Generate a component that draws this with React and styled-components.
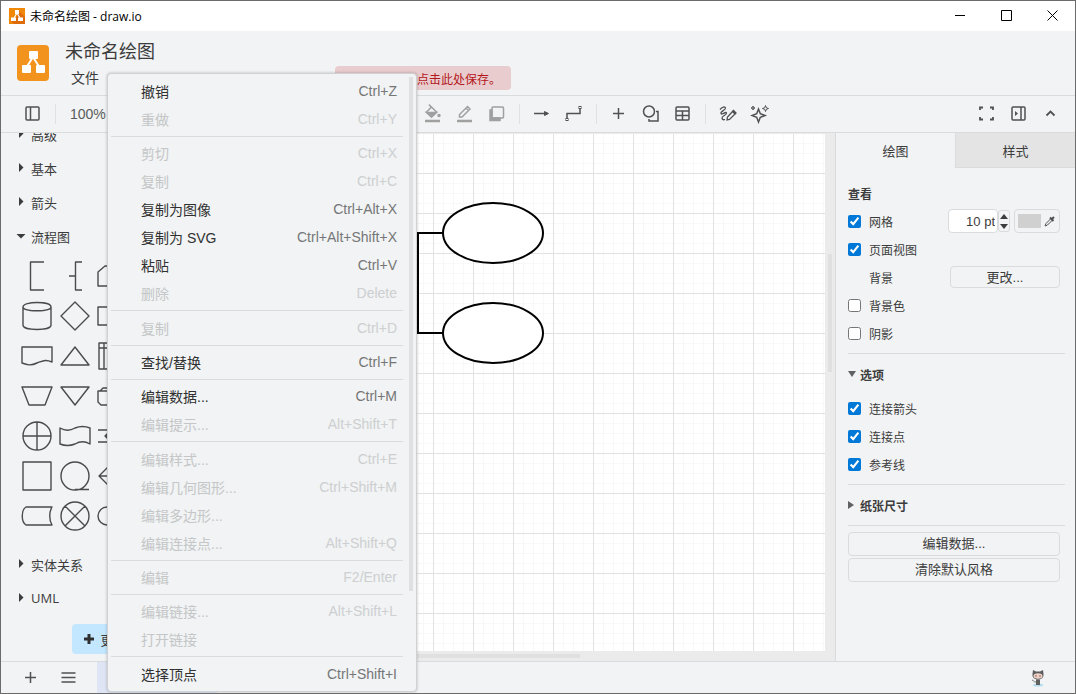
import { useState } from "react";
import styled, { createGlobalStyle } from "styled-components";

const ink = "#3c3c3c";
const chrome = "#f1f3f4";
const line = "#d9dbdc";
const uiFont = `"Open Sans", "Noto Sans CJK SC", sans-serif`;
const menuFont = `"Liberation Sans", "Noto Sans CJK SC", sans-serif`;

const GlobalStyle = createGlobalStyle`
  * {
    box-sizing: border-box;
  }
  body {
    margin: 0;
    font-family: ${menuFont};
    color: ${ink};
  }
  button {
    font: inherit;
    color: inherit;
    background: none;
    border: 0;
    padding: 0;
    cursor: pointer;
  }
`;

const Window = styled.div`
  position: relative;
  height: 100vh;
  display: flex;
  flex-direction: column;
  border: 1px solid #6b6b6b;
  background-color: ${chrome};
  overflow: hidden;
`;

const TitleBar = styled.div`
  height: 30px;
  flex: none;
  display: flex;
  align-items: center;
  padding-left: 8px;
  gap: 5px;
  background-color: white;
  color: black;
  font-family: ${uiFont};
  font-size: 12px;
`;

const TitleText = styled.span`
  flex: 1;
`;

const WindowButtons = styled.div`
  display: flex;
  height: 100%;
`;

const WindowButton = styled.button`
  width: 46px;
  display: flex;
  align-items: center;
  justify-content: center;
`;

const Header = styled.header`
  height: 65px;
  flex: none;
  display: flex;
  padding-left: 16px;
  gap: 16px;
  border-bottom: 1px solid ${line};
`;

const Logo = styled.svg`
  flex: none;
  margin-top: 14px;
`;

const HeaderMain = styled.div`
  flex: 1;
`;

const FileName = styled.h1`
  margin: 8px 0 0;
  font-size: 18px;
  font-weight: 400;
  line-height: 26px;
`;

const MenuBar = styled.div`
  display: flex;
  align-items: center;
  gap: 236px;
`;

const MenuBarItem = styled.button`
  margin-left: 6px;
  font-size: 14px;
  line-height: 26px;
`;

const SaveAlert = styled.button`
  height: 24px;
  padding: 0 10px;
  border-radius: 4px;
  background-color: #e9cccd;
  color: #b3171c;
  font-size: 12px;
`;

const Toolbar = styled.div`
  height: 37px;
  flex: none;
  display: flex;
  align-items: center;
  padding: 0 8px 0 16px;
  border-bottom: 1px solid ${line};
`;

const ToolButton = styled.button`
  width: 32px;
  height: 32px;
  display: flex;
  align-items: center;
  justify-content: center;
  color: ${({ disabled }) => (disabled ? "#a0a0a0" : "#505152")};
`;

const ToolSeparator = styled.div`
  width: 1px;
  height: 20px;
  margin: 0 6px;
  background-color: #dfe1e2;
`;

const ZoomButton = styled.button`
  width: 355px;
  padding-left: 8px;
  text-align: left;
  font-size: 14px;
  color: #5a5a5a;
`;

const Spacer = styled.div`
  flex: 1;
`;

const Body = styled.div`
  flex: 1;
  min-height: 0;
  display: flex;
`;

const Sidebar = styled.aside`
  width: 236px;
  flex: none;
  display: flex;
  flex-direction: column;
  border-right: 1px solid ${line};
`;

const Palettes = styled.div`
  flex: 1;
  overflow: hidden;
  display: flex;
  flex-direction: column;
  justify-content: flex-end;
`;

const PaletteTitle = styled.button`
  height: 34px;
  flex: none;
  display: flex;
  align-items: center;
  gap: 4px;
  padding-left: 14px;
  font-family: ${uiFont};
  font-size: 13px;
`;

const ShapeGrid = styled.div`
  flex: none;
  display: grid;
  grid-template-columns: repeat(3, 38px);
  grid-auto-rows: 40px;
  padding: 3px 0 11px 17px;
`;

const ShapeButton = styled.button`
  display: flex;
  align-items: center;
  justify-content: center;
`;

const MoreShapesBar = styled.div`
  height: 46px;
  flex: none;
  display: flex;
  justify-content: center;
  align-items: flex-start;
  padding-top: 9px;
`;

const MoreShapes = styled.button`
  height: 30px;
  display: flex;
  align-items: center;
  gap: 6px;
  padding: 0 12px;
  border-radius: 4px;
  background-color: #c2e7ff;
  font-size: 13px;
`;

const DiagramArea = styled.main`
  position: relative;
  flex: 1;
  min-width: 0;
  display: flex;
  padding: 1px 10px 10px 0;
  background-color: #ebebeb;
`;

const Page = styled.svg`
  flex: 1;
  min-width: 0;
  height: 100%;
  background-color: white;
  background-image: linear-gradient(to right, #e2e2e2 1px, transparent 1px),
    linear-gradient(to bottom, #e2e2e2 1px, transparent 1px),
    linear-gradient(to right, #f8f8f8 1px, transparent 1px),
    linear-gradient(to bottom, #f8f8f8 1px, transparent 1px);
  background-size: 40px 40px, 40px 40px, 10px 10px, 10px 10px;
  background-position: 36px -1px, 36px -1px, 6px -1px, 6px -1px;
`;

const ScrollThumb = styled.div`
  position: absolute;
  background-color: #e0e0e0;
  ${({ $vertical }) =>
    $vertical
      ? `right: 3px; top: 121px; width: 4px; height: 118px;`
      : `bottom: 3px; left: 0; height: 4px; width: 343px;`}
`;

const FormatPanel = styled.aside`
  width: 240px;
  flex: none;
  border-left: 1px solid ${line};
`;

const Tabs = styled.div`
  display: flex;
  height: 35px;
`;

const Tab = styled.button`
  flex: 1;
  font-size: 13px;
  ${({ $active }) =>
    !$active &&
    `
    background-color: #e4e4e4;
    border-left: 1px solid ${line};
    border-bottom: 1px solid ${line};
  `}
`;

const Section = styled.section`
  margin: 0 10px 0 12px;
  padding-bottom: ${({ $closed }) => ($closed ? "0" : "6px")};
  border-bottom: 1px solid ${line};
`;

const SectionTitle = styled.h2`
  margin: 0;
  height: 40px;
  display: flex;
  align-items: center;
  gap: 4px;
  font-size: 12px;
  font-weight: 700;
`;

const ViewTitle = styled(SectionTitle)`
  height: 27px;
  padding-top: 0;
  margin-top: 12px;
`;

const OptionRow = styled.div`
  height: 28px;
  display: flex;
  align-items: center;
  padding-right: 5px;
`;

const OptionLabel = styled.label`
  flex: 1;
  display: flex;
  align-items: center;
  gap: 8px;
  font-size: 12px;
`;

const Checkbox = styled.input`
  width: 13px;
  height: 13px;
  margin: 0;
  accent-color: #0078d7;
`;

const OptionText = styled.span`
  flex: 1;
  padding-left: 21px;
  font-size: 12px;
`;

const GridSize = styled.input`
  width: 50px;
  height: 24px;
  padding: 0 2px;
  border: 1px solid ${line};
  border-radius: 4px;
  background-color: white;
  color: ${ink};
  font-family: ${menuFont};
  font-size: 13px;
  text-align: right;
`;

const Stepper = styled.div`
  width: 12px;
  height: 22px;
  display: flex;
  flex-direction: column;
  border: 1px solid ${line};
  border-radius: 3px;
`;

const StepButton = styled.button`
  flex: 1;
  display: flex;
  align-items: center;
  justify-content: center;
`;

const PanelButton = styled.button`
  height: 24px;
  border: 1px solid ${line};
  border-radius: 4px;
  font-size: 13px;
  line-height: 22px;
`;

const ChangeButton = styled(PanelButton)`
  width: 110px;
  height: 22px;
`;

const ColorButton = styled(PanelButton)`
  width: 46px;
  margin-left: 4px;
  display: flex;
  align-items: center;
  justify-content: center;
  gap: 3px;
`;

const Swatch = styled.span`
  width: 23px;
  height: 14px;
  background-color: #d0d0d0;
`;

const PanelActions = styled.div`
  display: flex;
  flex-direction: column;
  gap: 2px;
  padding: 6px 15px 0 12px;
`;

const Footer = styled.footer`
  height: 32px;
  flex: none;
  display: flex;
  align-items: center;
  padding-left: 11px;
  border-top: 1px solid ${line};
`;

const FooterButton = styled.button`
  width: 38px;
  height: 31px;
  display: flex;
  align-items: center;
  justify-content: center;
  color: #505152;
`;

const PageTab = styled.button`
  width: 120px;
  height: 31px;
  margin-left: 9px;
  background-color: #dfe5f5;
  font-size: 12px;
`;

const CatLink = styled.a`
  display: flex;
  margin-right: 29px;
`;

const PopupMenu = styled.div`
  position: absolute;
  top: 72px;
  left: 106px;
  width: 310px;
  padding: 3px;
  border: 1px solid #cfd1d2;
  border-radius: 4px;
  background-color: ${chrome};
  box-shadow: 0 0 3px rgba(0, 0, 0, 0.25);
`;

const PopupItems = styled.div`
  padding-right: 10px;
`;

const PopupItem = styled.button`
  width: 100%;
  height: 28px;
  display: flex;
  align-items: center;
  justify-content: space-between;
  padding: 0 6px 0 30px;
  font-size: 14px;
  color: ${({ disabled }) => (disabled ? "#c4c6c7" : "#303030")};
`;

const Shortcut = styled.span`
  color: ${({ $disabled }) => ($disabled ? "#cdcfd0" : "#757677")};
`;

const PopupSeparator = styled.hr`
  height: 6px;
  margin: 0;
  border: 0;
  background: linear-gradient(${line}, ${line}) 0 3px / 100% 1px no-repeat;

  &:nth-of-type(3n + 2) {
    height: 7px;
  }
`;

const PopupScroll = styled.div`
  position: absolute;
  top: 3px;
  right: 3px;
  width: 4px;
  height: 514px;
  background-color: #e0e0e0;
`;

const menuGroups = [
  [
    { label: "撤销", keys: "Ctrl+Z", on: true },
    { label: "重做", keys: "Ctrl+Y" },
  ],
  [
    { label: "剪切", keys: "Ctrl+X" },
    { label: "复制", keys: "Ctrl+C" },
    { label: "复制为图像", keys: "Ctrl+Alt+X", on: true },
    { label: "复制为 SVG", keys: "Ctrl+Alt+Shift+X", on: true },
    { label: "粘贴", keys: "Ctrl+V", on: true },
    { label: "删除", keys: "Delete" },
  ],
  [{ label: "复制", keys: "Ctrl+D" }],
  [{ label: "查找/替换", keys: "Ctrl+F", on: true }],
  [
    { label: "编辑数据...", keys: "Ctrl+M", on: true },
    { label: "编辑提示...", keys: "Alt+Shift+T" },
  ],
  [
    { label: "编辑样式...", keys: "Ctrl+E" },
    { label: "编辑几何图形...", keys: "Ctrl+Shift+M" },
    { label: "编辑多边形..." },
    { label: "编辑连接点...", keys: "Alt+Shift+Q" },
  ],
  [{ label: "编辑", keys: "F2/Enter" }],
  [{ label: "编辑链接...", keys: "Alt+Shift+L" }, { label: "打开链接" }],
  [{ label: "选择顶点", keys: "Ctrl+Shift+I", on: true }],
];

// flowchart stencils, each drawn in a 32x32 box
const shapes = [
  ["注释", "M23 2H9.500V30H23"],
  ["注释 2", "M23 2H16.500V30H23M16.500 16H10"],
  ["卡片", "M1 12L8 6H31V26H1Z"],
  ["数据库", "M2 7C2 1 30 1 30 7V25C30 31 2 31 2 25ZM2 7C2 12 30 12 30 7"],
  ["判定", "M16 2L30 16L16 30L2 16Z"],
  ["延迟", "M1 7H22A9 9 0 0 1 22 25H1Z"],
  ["文档", "M1 7H31V22C24 19 22 21 16 23C10 26 6 25 1 23Z"],
  ["提取", "M16 7L30 25H2Z"],
  ["内部存储", "M2 3H30V29H2ZM7 3V29M2 8H30"],
  ["手动操作", "M1 7H31L24 25H8Z"],
  ["合并", "M2 7H30L16 25Z"],
  ["多文档", "M1 11H27V25H4L1 22ZM3 11L6 8H30V22H27"],
  ["或", "M16 2A14 14 0 1 1 16 30A14 14 0 1 1 16 2M16 2V30M2 16H30"],
  ["纸带", "M1 8C6 11 11 11 16 8C21 6 26 6 31 8V24C26 21 21 21 16 24C11 26 6 26 1 24Z"],
  ["并行", "M1 10H31M1 22H31M8 16H24M11 13L8 16L11 19"],
  ["流程", "M2 2H30V30H2Z"],
  ["顺序数据", "M16 2A14 14 0 1 1 16 30A14 14 0 1 1 16 2M16 29.500H30"],
  ["排序", "M16 2L30 16L16 30L2 16ZM2 16H30"],
  ["存储数据", "M5 7H31C28 12 28 20 31 25H5C0 22 0 10 5 7Z"],
  ["汇总", "M16 2A14 14 0 1 1 16 30A14 14 0 1 1 16 2M6 6L26 26M26 6L6 26"],
  ["终止符", "M10 7H22A9 9 0 0 1 22 25H10A9 9 0 0 1 10 7Z"],
];

const icons = {
  sidebar: (
    <>
      <rect x="3" y="3" width="13" height="13" rx="1" />
      <path d="M7.500 3V16" />
    </>
  ),
  fill: (
    <>
      <path d="M6 0.500L8.500 3.500" />
      <path d="M3.500 8L8.500 3L13.500 8L8.500 13Z" />
      <path d="M3.500 8.500H13.500L8.500 13Z" fill="currentColor" />
      <circle cx="16" cy="11.500" r="1" fill="currentColor" />
      <path d="M2 17H17" strokeWidth="2.500" />
    </>
  ),
  pen: (
    <>
      <path d="M4.500 13V10.500L12.500 2.500L15 5L7 13ZM11 4L13.500 6.500" />
      <path d="M2 17H17" strokeWidth="2.500" />
    </>
  ),
  shadow: (
    <>
      <path d="M3 6V16.500H13V14H5V6Z" fill="currentColor" />
      <rect x="5" y="3" width="11.500" height="11" rx="1" />
    </>
  ),
  arrow: (
    <>
      <path d="M2 9.500H15" />
      <path d="M12.500 7.500L16.500 9.500L12.500 11.500Z" fill="currentColor" strokeWidth="1" />
    </>
  ),
  elbow: (
    <>
      <path d="M3 15V9.500H16V5" />
      <rect x="2" y="14.500" width="2" height="2" strokeWidth="1" />
      <rect x="15" y="2.500" width="2" height="2" strokeWidth="1" />
    </>
  ),
  plus: <path d="M9.500 4V15M4 9.500H15" />,
  shapes: (
    <>
      <circle cx="8" cy="7.500" r="5.500" />
      <path d="M15 7.500H17V17H8V15" />
    </>
  ),
  table: (
    <>
      <rect x="3" y="3" width="13" height="13" rx="1" />
      <path d="M3 7H16M3 11.500H16M9.500 7V16" />
    </>
  ),
  freehand: (
    <g strokeWidth="1.300">
      <path d="M2 5.500C4 3 7 2 7.500 4S2 7.500 3 9.500S8 7 8.500 9S3.500 12 4 14S5.500 16 7 15.500" />
      <path d="M9 16L9.500 13L14.500 7.500L17 10L11.500 15.500Z" />
      <path d="M14.500 7.500L15.500 6.500L18 9L17 10" fill="currentColor" />
    </g>
  ),
  sparkle: (
    <>
      <path d="M8.500 5L10.300 9.700L15 11.500L10.300 13.300L8.500 18L6.700 13.300L2 11.500L6.700 9.700Z" />
      <path d="M15.500 1.500L16.300 3.700L18.500 4.500L16.300 5.300L15.500 7.500L14.700 5.300L12.500 4.500L14.700 3.700Z" strokeWidth="1" />
      <path d="M3 2L3.500 3.500L5 4L3.500 4.500L3 6L2.500 4.500L1 4L2.500 3.500Z" strokeWidth="1" />
    </>
  ),
  fullscreen: <path d="M3 6V3.500H6M13 3.500H16V6M16 13V15.500H13M6 15.500H3V13" strokeWidth="1.800" />,
  format: (
    <>
      <rect x="3" y="3" width="13" height="13" rx="1" />
      <path d="M12 3V16" />
      <path d="M6 7L9 9.500L6 12Z" fill="currentColor" stroke="none" />
    </>
  ),
  collapse: <path d="M5.500 11.500L9.500 7.500L13.500 11.500" strokeWidth="1.800" />,
  pages: <path d="M2.500 5H16.500M2.500 9.500H16.500M2.500 14H16.500" strokeWidth="1.600" />,
};

function Icon({ name }) {
  return (
    <svg width="20" height="20" fill="none" stroke="currentColor" strokeWidth="1.500">
      {icons[name]}
    </svg>
  );
}

function Tool({ name, title, disabled }) {
  return (
    <ToolButton aria-label={title} disabled={disabled}>
      <Icon name={name} />
    </ToolButton>
  );
}

function Caret({ open }) {
  return (
    <svg width="12" height="12" fill="#3c3c3c">
      <path d={open ? "M1.500 4H10.500L6 8.500Z" : "M4 1L8.500 5.500L4 10Z"} />
    </svg>
  );
}

function PanelCaret({ open }) {
  return (
    <svg width="8" height="10" fill="#606162">
      <path d={open ? "M0 2H8L4 8Z" : "M0 1L6 5L0 9Z"} />
    </svg>
  );
}

function AppMark() {
  return (
    <svg width="16" height="16">
      <rect width="16" height="16" fill="#f08705" />
      <path d="M10 3L16 9V16H5L2 13L8 8Z" fill="#df6c0c" />
      <path d="M8 5L4.500 11M8 5L11.500 11" stroke="white" strokeWidth="1.200" />
      <rect x="6" y="2" width="4" height="4" fill="white" />
      <rect x="2" y="9.500" width="5" height="3.500" fill="white" />
      <rect x="9" y="9.500" width="5" height="3.500" fill="white" />
    </svg>
  );
}

function Octocat() {
  return (
    <svg width="16" height="18">
      <ellipse cx="8" cy="16" rx="5" ry="1.500" fill="#b5dcec" />
      <path d="M3 1L6 2.500H10L13 1L13.500 5C14 9 11 10.500 8 10.500S2 9 2.500 5Z" fill="#5c5c5c" />
      <ellipse cx="8" cy="7" rx="4.500" ry="2.800" fill="#eed2c8" />
      <circle cx="6" cy="7" r="1" fill="#b08a82" />
      <circle cx="10" cy="7" r="1" fill="#b08a82" />
      <path d="M6 10.500H10V16H6Z" fill="#606060" />
      <path d="M6 13C4 13.500 4 11.500 2 11" stroke="#777" fill="none" />
    </svg>
  );
}

function Option({ label, initial = false, children }) {
  const [checked, setChecked] = useState(initial);
  return (
    <OptionRow>
      <OptionLabel>
        <Checkbox type="checkbox" checked={checked} onChange={() => setChecked(!checked)} />
        {label}
      </OptionLabel>
      {children}
    </OptionRow>
  );
}

function EditMenu() {
  return (
    <PopupMenu role="menu">
      <PopupItems>
        {menuGroups.flatMap((group, i) => [
          i > 0 && <PopupSeparator key={`sep${i}`} />,
          ...group.map(({ label, keys, on }) => (
            <PopupItem key={i + label} role="menuitem" disabled={!on}>
              {label}
              <Shortcut $disabled={!on}>{keys}</Shortcut>
            </PopupItem>
          )),
        ])}
      </PopupItems>
      <PopupScroll />
    </PopupMenu>
  );
}

function ShapeSidebar() {
  return (
    <Sidebar>
      <Palettes>
        {["高级", "基本", "箭头"].map((name) => (
          <PaletteTitle key={name}>
            <Caret />
            {name}
          </PaletteTitle>
        ))}
        <PaletteTitle>
          <Caret open />
          流程图
        </PaletteTitle>
        <ShapeGrid>
          {shapes.map(([name, d]) => (
            <ShapeButton key={name} aria-label={name}>
              <svg width="32" height="32" fill="none" stroke="#4a4b4c" strokeWidth="1.400" strokeLinejoin="round">
                <path d={d} />
              </svg>
            </ShapeButton>
          ))}
        </ShapeGrid>
        {["实体关系", "UML"].map((name) => (
          <PaletteTitle key={name}>
            <Caret />
            {name}
          </PaletteTitle>
        ))}
      </Palettes>
      <MoreShapesBar>
        <MoreShapes>
          <svg width="10" height="10" stroke="#303030" strokeWidth="3">
            <path d="M5 0V10M0 5H10" />
          </svg>
          更多图形
        </MoreShapes>
      </MoreShapesBar>
    </Sidebar>
  );
}

function DiagramFormat() {
  return (
    <FormatPanel>
      <Tabs>
        <Tab $active>绘图</Tab>
        <Tab>样式</Tab>
      </Tabs>
      <Section>
        <ViewTitle>查看</ViewTitle>
        <Option label="网格" initial>
          <GridSize aria-label="网格大小" defaultValue="10 pt" />
          <Stepper>
            <StepButton aria-label="增加">
              <svg width="8" height="5" fill={ink}>
                <path d="M0 5L4 0L8 5Z" />
              </svg>
            </StepButton>
            <StepButton aria-label="减少">
              <svg width="8" height="5" fill={ink}>
                <path d="M0 0H8L4 5Z" />
              </svg>
            </StepButton>
          </Stepper>
          <ColorButton aria-label="网格颜色">
            <Swatch />
            <svg width="12" height="12" fill="none" stroke="#505152">
              <path d="M1 11L2 8.500L7 3.500L8.500 5L3.500 10Z" />
              <path d="M6 2.500L9.500 6M8 4L10 2" strokeWidth="2" />
            </svg>
          </ColorButton>
        </Option>
        <Option label="页面视图" initial />
        <OptionRow>
          <OptionText>背景</OptionText>
          <ChangeButton>更改...</ChangeButton>
        </OptionRow>
        <Option label="背景色" />
        <Option label="阴影" />
      </Section>
      <Section>
        <SectionTitle>
          <PanelCaret open />
          选项
        </SectionTitle>
        <Option label="连接箭头" initial />
        <Option label="连接点" initial />
        <Option label="参考线" initial />
      </Section>
      <Section $closed>
        <SectionTitle>
          <PanelCaret />
          纸张尺寸
        </SectionTitle>
      </Section>
      <PanelActions>
        <PanelButton>编辑数据...</PanelButton>
        <PanelButton>清除默认风格</PanelButton>
      </PanelActions>
    </FormatPanel>
  );
}

export default function App() {
  return (
    <Window>
      <GlobalStyle />
      <TitleBar>
        <AppMark />
        <TitleText>未命名绘图 - draw.io</TitleText>
        <WindowButtons>
          {[
            ["最小化", "M1 5.500H11"],
            ["最大化", "M1.500 0.500H11.500V10.500H1.500Z"],
            ["关闭", "M1.500 0.500L11.500 10.500M11.500 0.500L1.500 10.500"],
          ].map(([title, d]) => (
            <WindowButton key={title} aria-label={title}>
              <svg width="12" height="12" fill="none" stroke="black">
                <path d={d} />
              </svg>
            </WindowButton>
          ))}
        </WindowButtons>
      </TitleBar>
      <Header>
        <Logo width="32" height="36">
          <rect width="32" height="36" rx="4" fill="#f2931e" />
          <path d="M16 12L9 23M16 12L23 23" stroke="white" strokeWidth="2" />
          <rect x="12" y="6" width="9" height="8" rx="1" fill="white" />
          <rect x="5" y="20" width="9" height="8" rx="1" fill="white" />
          <rect x="19" y="20" width="9" height="8" rx="1" fill="white" />
        </Logo>
        <HeaderMain>
          <FileName>未命名绘图</FileName>
          <MenuBar>
            <MenuBarItem>文件</MenuBarItem>
            <SaveAlert>修改未保存。点击此处保存。</SaveAlert>
          </MenuBar>
        </HeaderMain>
      </Header>
      <Toolbar>
        <Tool name="sidebar" title="图形" />
        <ToolSeparator />
        <ZoomButton>100%</ZoomButton>
        <Tool name="fill" title="填充颜色" disabled />
        <Tool name="pen" title="线条颜色" disabled />
        <Tool name="shadow" title="阴影" disabled />
        <ToolSeparator />
        <Tool name="arrow" title="连接" />
        <Tool name="elbow" title="航点" />
        <ToolSeparator />
        <Tool name="plus" title="插入" />
        <Tool name="shapes" title="形状" />
        <Tool name="table" title="表格" />
        <ToolSeparator />
        <Tool name="freehand" title="自由绘图" />
        <Tool name="sparkle" title="生成" />
        <Spacer />
        <Tool name="fullscreen" title="全屏" />
        <Tool name="format" title="格式" />
        <Tool name="collapse" title="折叠" />
      </Toolbar>
      <Body>
        <ShapeSidebar />
        <DiagramArea>
          <Page fill="white" stroke="black" strokeWidth="2">
            <path d="M206 99H181V199H206" fill="none" />
            <ellipse cx="256" cy="99" rx="50" ry="30" />
            <ellipse cx="256" cy="199" rx="50" ry="30" />
          </Page>
          <ScrollThumb $vertical />
          <ScrollThumb />
        </DiagramArea>
        <DiagramFormat />
      </Body>
      <Footer>
        <FooterButton aria-label="插入页面">
          <Icon name="plus" />
        </FooterButton>
        <FooterButton aria-label="页面">
          <Icon name="pages" />
        </FooterButton>
        <PageTab aria-label="第 1 页" />
        <Spacer />
        <CatLink href="#" aria-label="GitHub">
          <Octocat />
        </CatLink>
      </Footer>
      <EditMenu />
    </Window>
  );
}
